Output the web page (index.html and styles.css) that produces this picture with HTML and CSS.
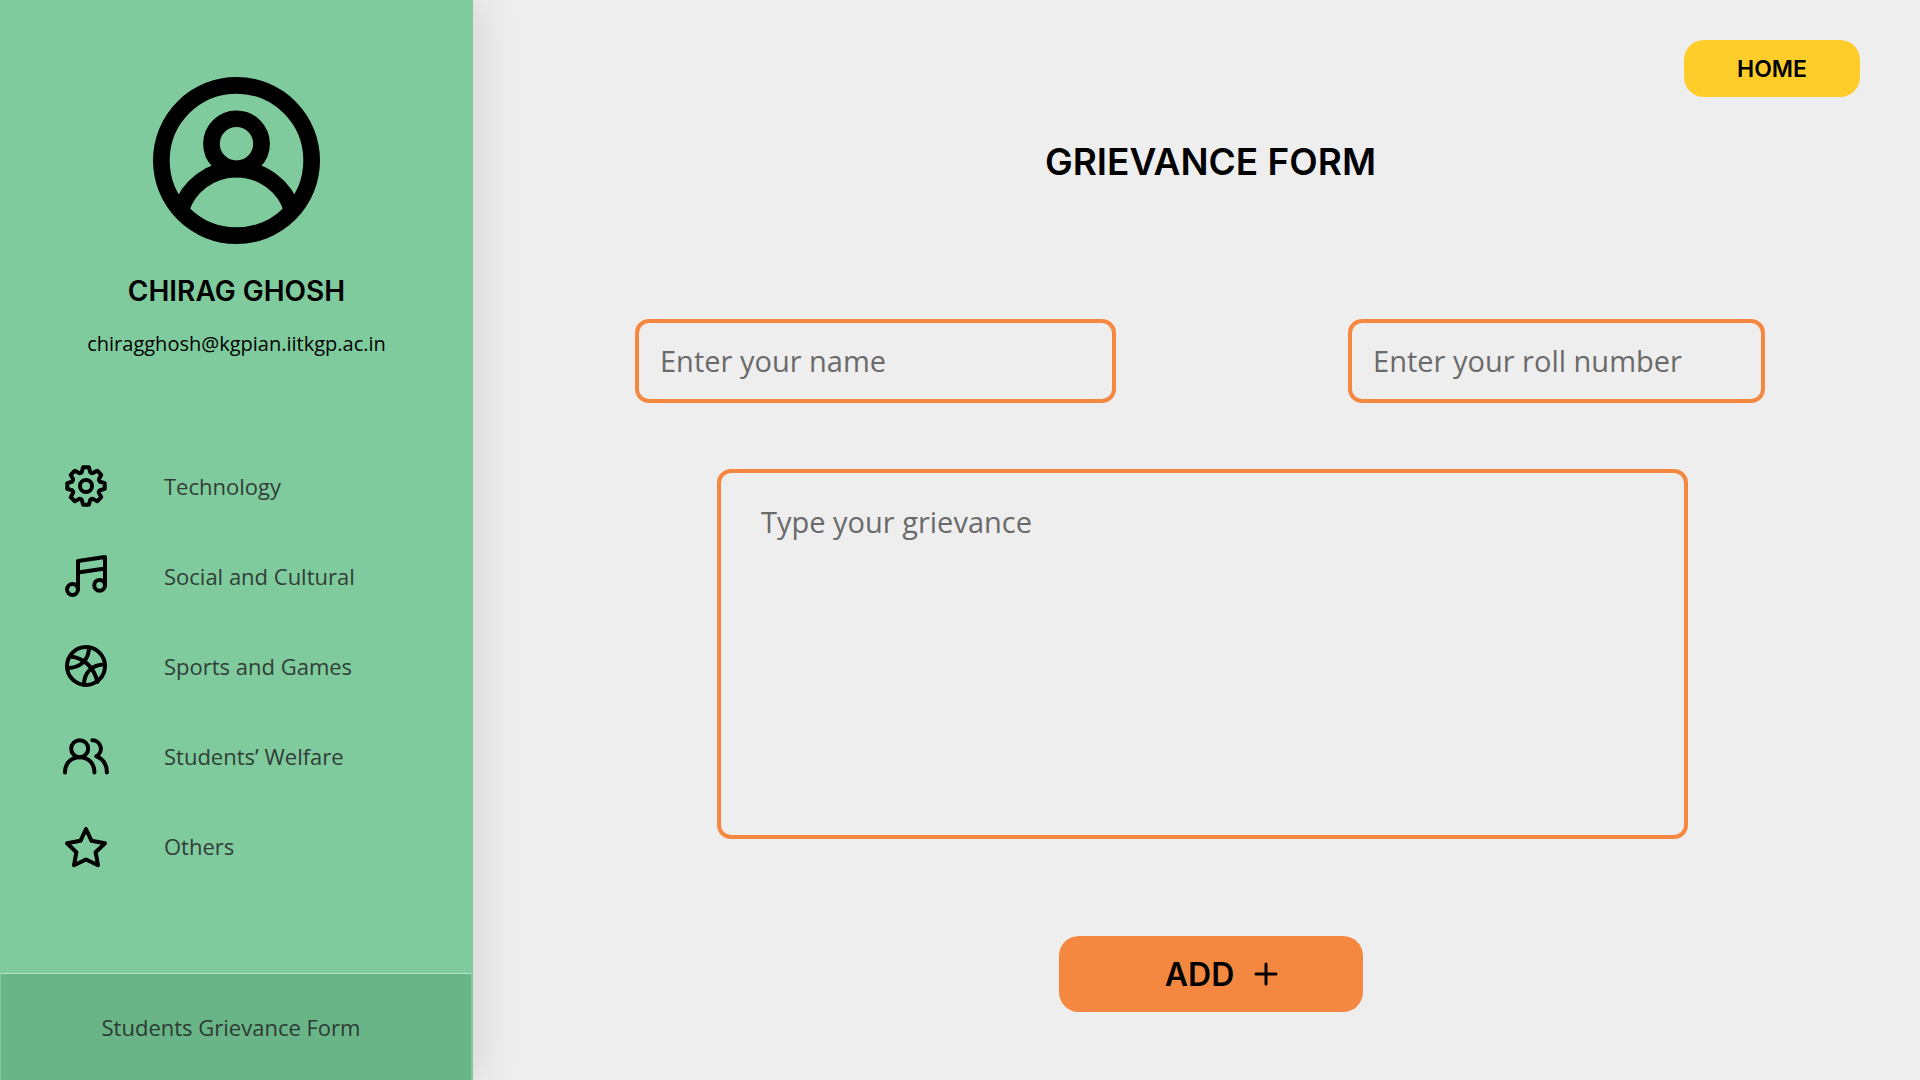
FILE: index.html
```html
<!DOCTYPE html>
<html lang="en">
<head>
  <meta charset="utf-8">
  <meta name="viewport" content="width=device-width, initial-scale=1">
  <title>Students Grievance Form</title>
  <link rel="stylesheet" href="styles.css">
</head>
<body>
  <div class="layout">
    <aside class="sidebar">
      <div class="profile">
        <svg class="avatar" viewBox="0 0 20 20" aria-hidden="true">
          <circle cx="10" cy="10" r="9"/>
          <circle cx="10" cy="8" r="3"/>
          <path d="M3.3 16A7 7 0 0 1 16.7 16"/>
        </svg>
        <h2 class="profile-name">CHIRAG GHOSH</h2>
        <p class="profile-email">chiragghosh@kgpian.iitkgp.ac.in</p>
      </div>
      <nav class="menu">
        <a class="menu-item" href="#technology">
          <svg class="menu-icon" viewBox="0 0 60 60" aria-hidden="true">
            <circle cx="30" cy="30" r="6"/>
            <path transform="translate(30 30)" d="M-4.2-14-2.9-18.7 2.9-18.7 4.2-14Q5.2-12.6 6.9-12.9L11.2-15.3 15.3-11.2 12.9-6.9Q12.6-5.2 14-4.2L18.7-2.9 18.7 2.9 14 4.2Q12.6 5.2 12.9 6.9L15.3 11.2 11.2 15.3 6.9 12.9Q5.2 12.6 4.2 14L2.9 18.7-2.9 18.7-4.2 14Q-5.2 12.6-6.9 12.9L-11.2 15.3-15.3 11.2-12.9 6.9Q-12.6 5.2-14 4.2L-18.7 2.9-18.7-2.9-14-4.2Q-12.6-5.2-12.9-6.9L-15.3-11.2-11.2-15.3-6.9-12.9Q-5.2-12.6-4.2-14Z"/>
          </svg>
          <span>Technology</span>
        </a>
        <a class="menu-item" href="#social">
          <svg class="menu-icon" viewBox="0 0 60 60" aria-hidden="true">
            <circle cx="16.5" cy="43.5" r="5.4"/>
            <circle cx="43.6" cy="39.3" r="5.4"/>
            <path d="M22 43.5V15L49 11V39.3M22 26.5 49 22.5"/>
          </svg>
          <span>Social and Cultural</span>
        </a>
        <a class="menu-item" href="#sports">
          <svg class="menu-icon" viewBox="0 0 60 60" aria-hidden="true">
            <circle cx="30" cy="30" r="19"/>
            <path d="M14.5 20.5C28 22 38 31 41.5 46M33 11.5C33 23 25 32 11.5 32M48.5 28.5C36 28.5 28 37 28 48.5"/>
          </svg>
          <span>Sports and Games</span>
        </a>
        <a class="menu-item" href="#welfare">
          <svg class="menu-icon" viewBox="0 0 60 60" aria-hidden="true">
            <circle cx="23.7" cy="22.7" r="8.5"/>
            <path d="M9 46.5C9 37.5 15 31.2 23.7 31.2S38.4 37.5 38.4 46.5M36.3 14.2A8.5 8.5 0 0 1 40.3 30.2C47 33 50.9 39 50.9 46.5"/>
          </svg>
          <span>Students’ Welfare</span>
        </a>
        <a class="menu-item" href="#others">
          <svg class="menu-icon" viewBox="0 0 60 60" aria-hidden="true">
            <path d="M30 13 35.5 24.8 49 27.3 39.6 36.2 42 49.2 30 43.5 18 49.2 20.4 36.2 11 27.3 24.5 24.8Z"/>
          </svg>
          <span>Others</span>
        </a>
      </nav>
      <footer class="sidebar-footer">Students Grievance Form</footer>
    </aside>

    <main class="content">
      <header class="topbar">
        <button class="button button-home" type="button">HOME</button>
      </header>
      <h1 class="title">GRIEVANCE FORM</h1>
      <form class="form">
        <div class="field-row">
          <input class="field field-line" type="text" placeholder="Enter your name" aria-label="Name">
          <input class="field field-line" type="text" placeholder="Enter your roll number" aria-label="Roll number">
        </div>
        <textarea class="field field-grievance" placeholder="Type your grievance" aria-label="Grievance"></textarea>
        <button class="button button-add" type="button">
          <span>ADD</span>
          <svg class="plus-icon" viewBox="0 0 24 24" aria-hidden="true"><path d="M12 2V22M2 12H22"/></svg>
        </button>
      </form>
    </main>
  </div>
</body>
</html>
```
FILE: styles.css
```css
* {
  box-sizing: border-box;
}

body {
  margin: 0;
  background: #eeeeee;
  color: #000000;
  font-family: "Open Sans", sans-serif;
  font-size: 22px;
}

.layout {
  display: flex;
  min-height: 100vh;
}

svg {
  fill: none;
  stroke: #000000;
}

/* Sidebar */
.sidebar {
  display: flex;
  flex: 0 0 473px;
  flex-direction: column;
  background: #7fcb9d;
  box-shadow: 4px 0 40px rgba(0, 0, 0, 0.12);
}

.profile {
  display: flex;
  flex-direction: column;
  align-items: center;
  padding-top: 77px;
}

.avatar {
  width: 167px;
  height: 167px;
  stroke-width: 2;
}

.profile-name {
  margin: 29px 0 0;
  font-family: Inter, sans-serif;
  font-size: 28px;
  font-weight: 600;
  line-height: 36px;
}

.profile-email {
  margin: 20px 0 0;
  font-size: 20px;
  line-height: 30px;
}

.menu {
  display: flex;
  flex-direction: column;
  gap: 30px;
  margin-top: 97px;
  padding-left: 56px;
}

.menu-item {
  display: flex;
  align-items: center;
  gap: 48px;
  color: #323d37;
  text-decoration: none;
}

.menu-icon {
  width: 60px;
  height: 60px;
  stroke-width: 4;
  stroke-linecap: round;
  stroke-linejoin: round;
}

.sidebar-footer {
  display: flex;
  align-items: center;
  justify-content: center;
  height: 107px;
  margin: auto 1px 0 0;
  padding-right: 10px;
  border: 1px solid #7fcb9d;
  border-top-color: #b3dfc4;
  border-bottom: 0;
  background: #69b587;
  color: #2d3a33;
}

/* Main area */
.content {
  flex: 1;
  min-width: 0;
  padding: 40px 0 68px 28px;
}

.topbar {
  display: flex;
  justify-content: flex-end;
  padding-right: 60px;
}

.button {
  border: 0;
  border-radius: 20px;
  color: #000000;
  font-family: Inter, sans-serif;
  font-weight: 600;
  cursor: pointer;
}

.button-home {
  width: 176px;
  height: 57px;
  background: #ffcd29;
  font-size: 23px;
}

.title {
  margin: 41px 0 0;
  font-family: Inter, sans-serif;
  font-size: 37px;
  font-weight: 600;
  line-height: 48px;
  text-align: center;
}

.form {
  display: flex;
  flex-direction: column;
  margin-top: 133px;
}

.field-row {
  display: grid;
  grid-template-columns: 15fr 13fr;
  gap: 232px;
  margin: 0 155px 0 134px;
}

.field {
  display: block;
  min-width: 0;
  margin: 0;
  border: 4px solid #f58840;
  border-radius: 14px;
  background: transparent;
  color: #000000;
  font-family: "Open Sans", sans-serif;
  font-size: 29px;
  line-height: 40px;
}

.field::placeholder {
  color: #6a6a6a;
  opacity: 1;
}

.field-line {
  width: 100%;
  height: 84px;
  padding: 0 21px 2px;
}

.field-grievance {
  height: 370px;
  margin: 66px 232px 0 216px;
  padding: 29px 40px;
  resize: none;
}

.button-add {
  display: flex;
  align-items: center;
  justify-content: center;
  align-self: center;
  gap: 20px;
  width: 304px;
  height: 76px;
  margin-top: 97px;
  padding-left: 28px;
  background: #f58840;
  font-size: 32px;
}

.plus-icon {
  width: 24px;
  height: 24px;
  stroke-width: 3;
  stroke-linecap: round;
}
```
